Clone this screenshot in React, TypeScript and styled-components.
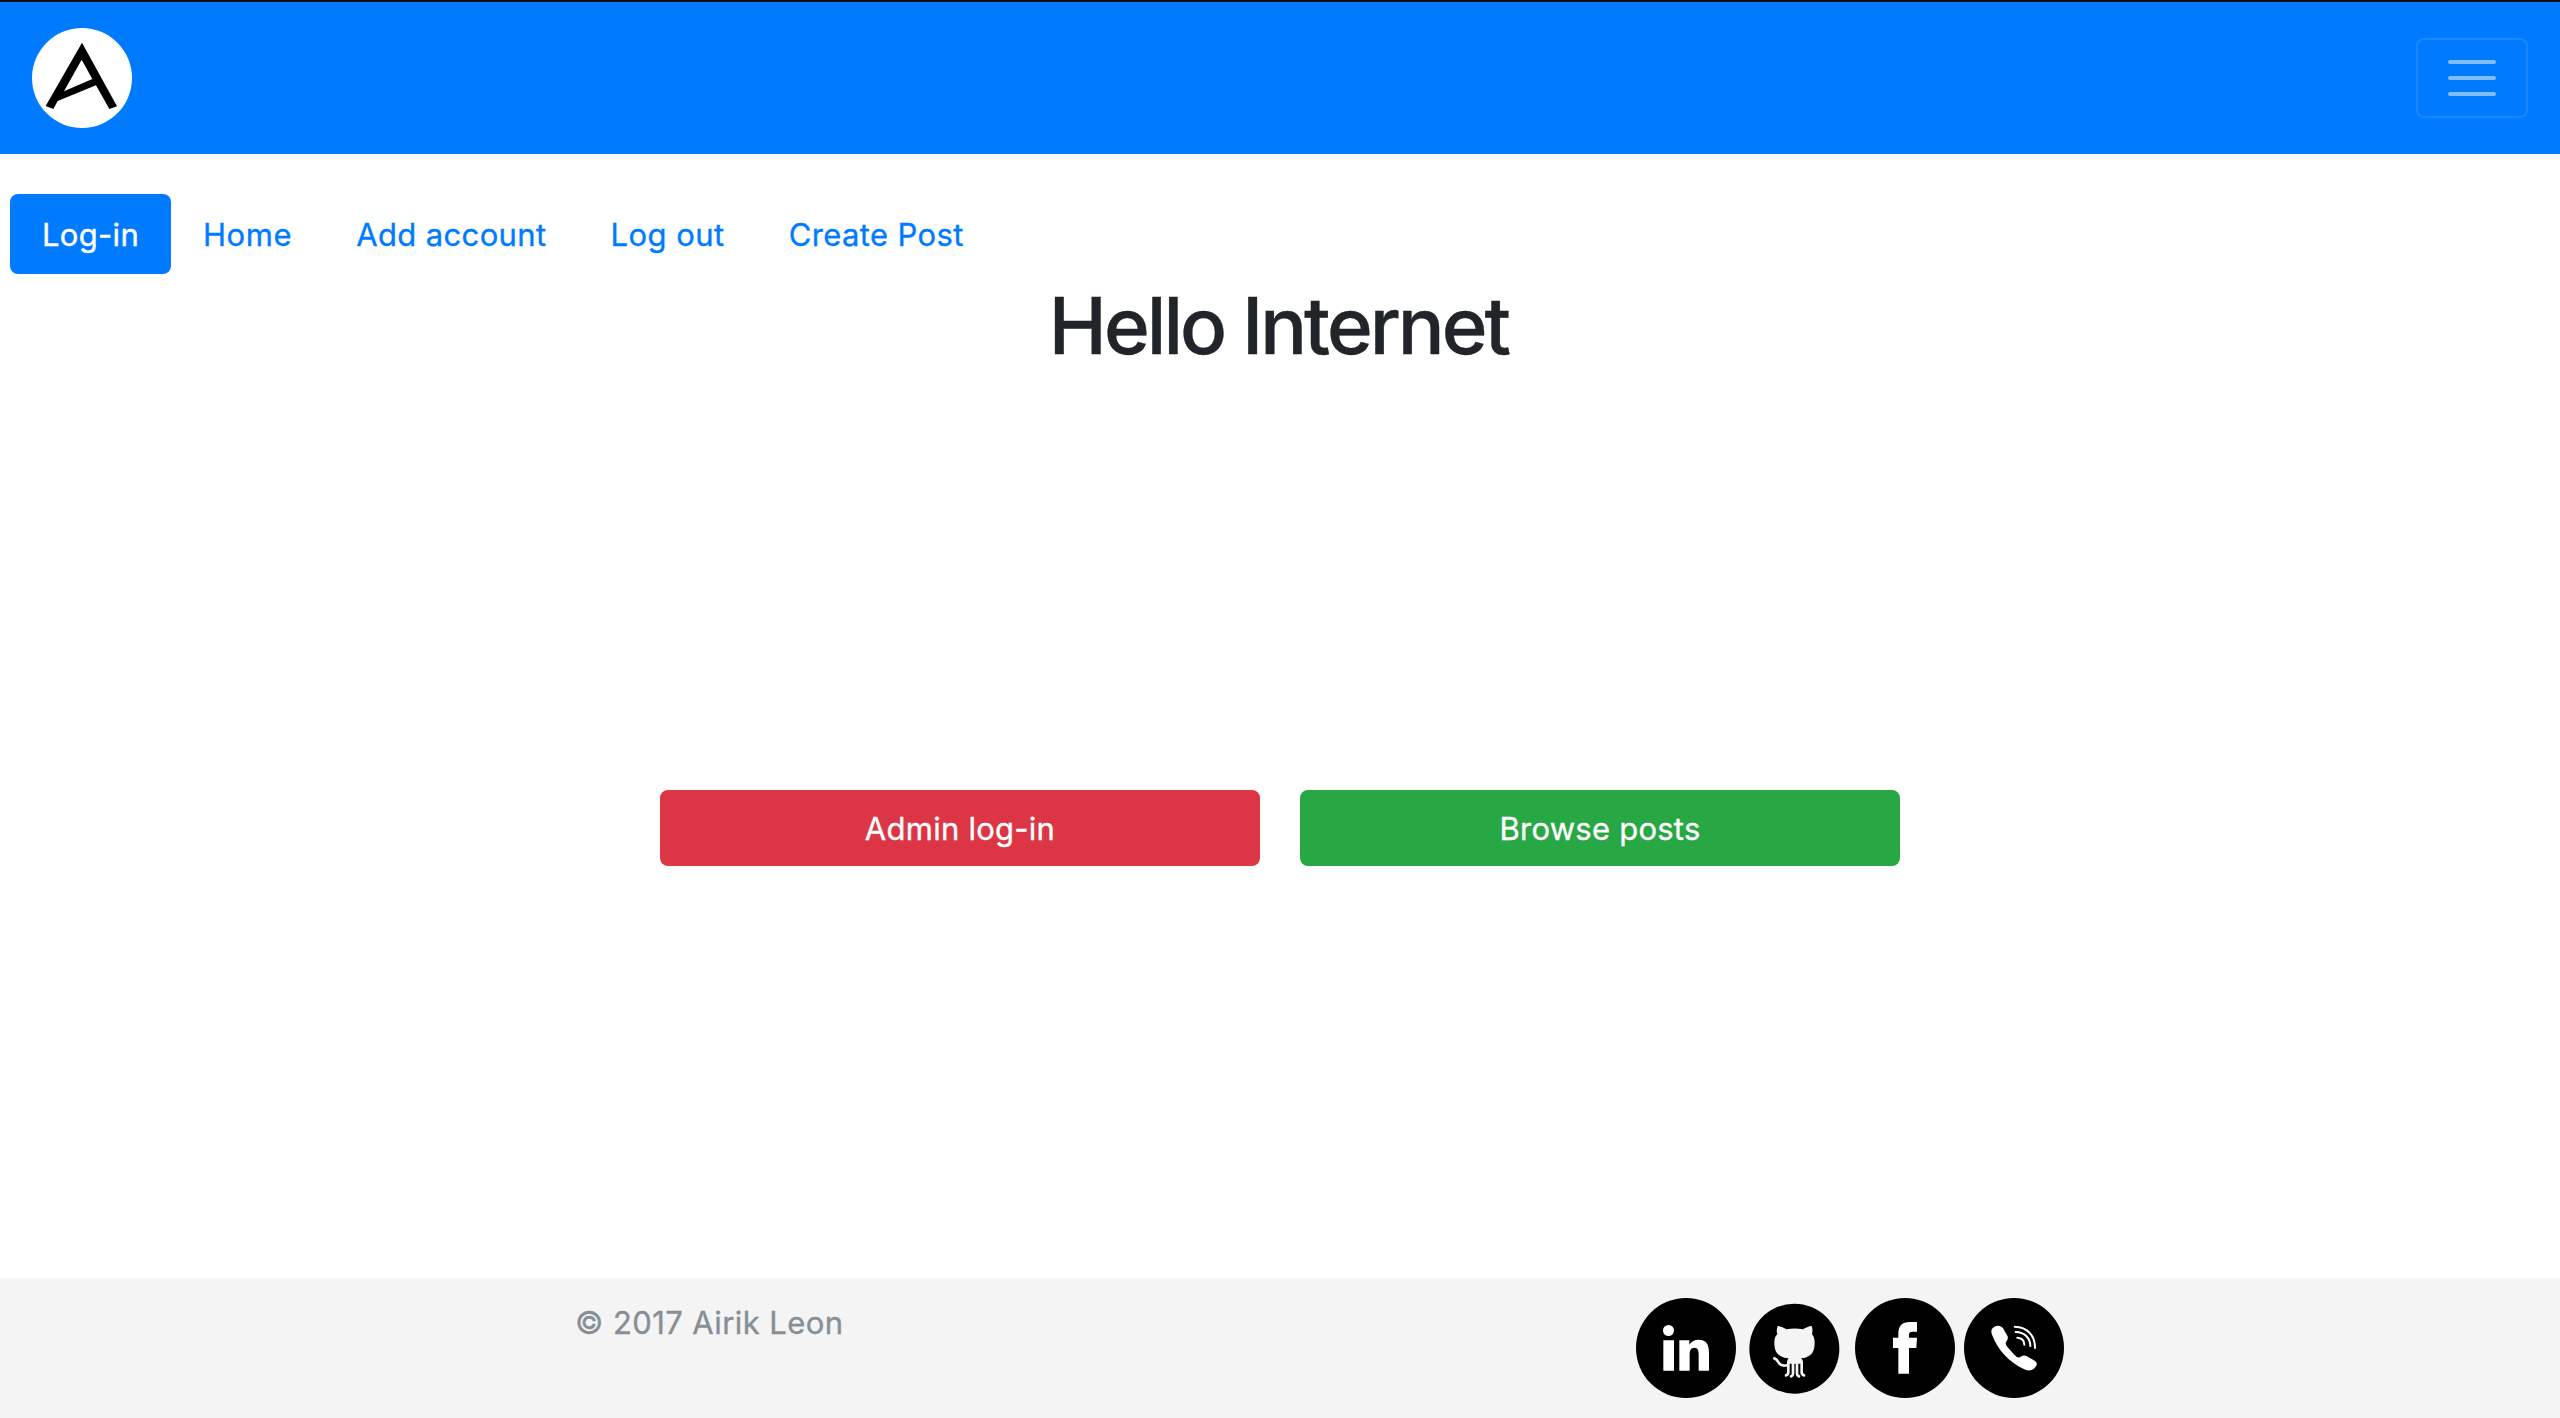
import React from "react";
import styled, { createGlobalStyle } from "styled-components";

const GlobalStyle = createGlobalStyle`
  *, *::before, *::after { box-sizing: border-box; }
  body {
    margin: 0;
    background: #fff;
    color: #212529;
    font-family: Inter, "Liberation Sans", sans-serif;
    font-size: 31px;
    line-height: 48px;
    -webkit-text-stroke-width: 0.35px;
  }
`;

const Page = styled.div`
  display: flex;
  flex-direction: column;
  min-height: 100vh;
  border-top: 2px solid #0b0d10;
`;

const Navbar = styled.header`
  display: flex;
  align-items: center;
  justify-content: space-between;
  height: 152px;
  padding: 0 32px;
  background: #007bff;
`;

const Brand = styled.a`
  display: flex;
`;

const Toggler = styled.button`
  display: flex;
  align-items: center;
  justify-content: center;
  width: 112px;
  height: 80px;
  padding: 0;
  background: transparent;
  border: 2px solid rgba(255, 255, 255, 0.1);
  border-radius: 8px;
`;

const Pills = styled.nav`
  display: flex;
  margin-top: 40px;
  padding-left: 10px;
`;

const Pill = styled.a<{ $active?: boolean; $tracking: number }>`
  height: 80px;
  padding: 17px 32px 15px;
  border-radius: 8px;
  white-space: nowrap;
  text-decoration: none;
  letter-spacing: ${(p) => p.$tracking}px;
  color: ${(p) => (p.$active ? "#fff" : "#007bff")};
  background: ${(p) => (p.$active ? "#007bff" : "transparent")};
`;

const Title = styled.h1`
  margin: 8px 0 0;
  padding-right: 3px;
  text-align: center;
  font-size: 78px;
  font-weight: 500;
  line-height: 88px;
  letter-spacing: -3px;
`;

const Actions = styled.div`
  display: flex;
  justify-content: center;
  gap: 40px;
  margin-top: 420px;
`;

const Action = styled.button<{ $color: string }>`
  width: 600px;
  height: 76px;
  padding: 1px 0 0;
  border: 0;
  border-radius: 8px;
  color: #fff;
  font: inherit;
  letter-spacing: 0.25px;
  background: ${(p) => p.$color};
`;

const Footer = styled.footer`
  display: flex;
  justify-content: space-between;
  height: 140px;
  margin-top: auto;
  padding: 20px 496px 20px 575px;
  background: #f4f4f4;
`;

const Copyright = styled.span`
  color: #868e96;
  padding-top: 1px;
  letter-spacing: 0.42px;
`;

const Social = styled.div`
  display: flex;
  gap: 9.33px;
`;

const SocialLink = styled.a`
  display: flex;
  width: 100px;
  height: 100px;
`;

const Disc = ({ children, small }: { children: React.ReactNode; small?: boolean }) => (
  <svg width="100" height="100" viewBox="0 0 300 300">
    {small ? <circle cx="148" cy="152" r="135" /> : <circle cx="150" cy="150" r="150" />}
    {children}
  </svg>
);

const LinkedIn = () => (
  <Disc>
    <g fill="#fff">
      <circle cx="97.500" cy="97.500" r="16.500" />
      <path d="M82 127h32v91H82zM130 127h30v13c5-9 15-15 28-15 24 0 31 15 31 40v53h-31v-48c0-12-2-21-13-21s-14 9-14 21v48h-31z" />
    </g>
  </Disc>
);

const GitHub = () => (
  <Disc small>
    <path
      fill="#f4f4f4"
      d="M98 84C106 84 118 90 124 94C140 91 158 91 174 94C180 90 192 84 200 84C203 92 203 101 201 108C206 114 209 122 209 134C209 166 195 178 168 181C173 185 174 190 174 197H126C126 190 127 185 131 181C103 178 88 166 88 134C88 122 91 114 97 108C94 101 95 92 98 84Z"
    />
    <g fill="none" stroke="#f4f4f4" strokeWidth="8" strokeLinecap="round">
      <path d="M130 192V223C130 229 127 231 123 232M144 192V226C144 231 142 234 138 235M156 192V226C156 231 158 234 162 235M170 192V223C170 229 173 231 177 232" />
      <path d="M128 201C112 206 106 202 101 194C97 187 93 183 88 181" />
    </g>
  </Disc>
);

const Facebook = () => (
  <Disc>
    <path
      fill="#fff"
      d="M186 72v29h-13c-9 0-11 3-11 10v8h24l-2 31h-22v77h-32v-77h-16v-31h16v-11c0-25 12-36 34-36z"
    />
  </Disc>
);

const Phone = () => (
  <Disc>
    <path
      fill="#fff"
      d="M91 86c11-5 21-3 26 5l13 22c3 6 2 10-2 16-5 6-3 11 3 19l20 22c7 7 12 11 19 6 6-4 11-5 17-2l25 14c7 4 8 11 4 17-9 13-21 16-35 9-46-22-80-58-97-104-4-11-2-19 7-24z"
    />
    <g fill="none" stroke="#fff" strokeWidth="6" strokeLinecap="round">
      <path d="M152 86c39 1 61 27 61 64M155 102c28 0 44 20 44 42M160 119c14 1 21 9 21 21" />
    </g>
  </Disc>
);

const LINKS = [
  { label: "Log-in", tracking: 0.3, active: true },
  { label: "Home", tracking: 0.57 },
  { label: "Add account", tracking: 0.37 },
  { label: "Log out", tracking: 0.46 },
  { label: "Create Post", tracking: 0.37 },
];

export default function App() {
  return (
    <>
      <GlobalStyle />
      <Page>
        <Navbar>
          <Brand aria-label="Home page">
            <svg width="100" height="100" viewBox="0 0 300 300">
              <circle cx="150" cy="150" r="150" fill="#fff" />
              <path
                fillRule="evenodd"
                d="M150 44L255 235L232 243L192 172L77 219L64 243L41 234ZM149 95L96 190L181 153Z"
              />
            </svg>
          </Brand>
          <Toggler aria-label="Toggle navigation">
            <svg width="60" height="60" viewBox="0 0 30 30">
              <path
                d="M4 7h22M4 15h22M4 23h22"
                stroke="rgba(255,255,255,0.5)"
                strokeWidth="2"
                strokeLinecap="round"
              />
            </svg>
          </Toggler>
        </Navbar>
        <Pills>
          {LINKS.map((l) => (
            <Pill key={l.label} $active={l.active} $tracking={l.tracking}>
              {l.label}
            </Pill>
          ))}
        </Pills>
        <Title>Hello Internet</Title>
        <Actions>
          <Action $color="#dc3545">Admin log-in</Action>
          <Action $color="#28a745">Browse posts</Action>
        </Actions>
        <Footer>
          <Copyright>© 2017 Airik Leon</Copyright>
          <Social>
            <SocialLink aria-label="LinkedIn"><LinkedIn /></SocialLink>
            <SocialLink aria-label="GitHub"><GitHub /></SocialLink>
            <SocialLink aria-label="Facebook"><Facebook /></SocialLink>
            <SocialLink aria-label="Phone"><Phone /></SocialLink>
          </Social>
        </Footer>
      </Page>
    </>
  );
}
